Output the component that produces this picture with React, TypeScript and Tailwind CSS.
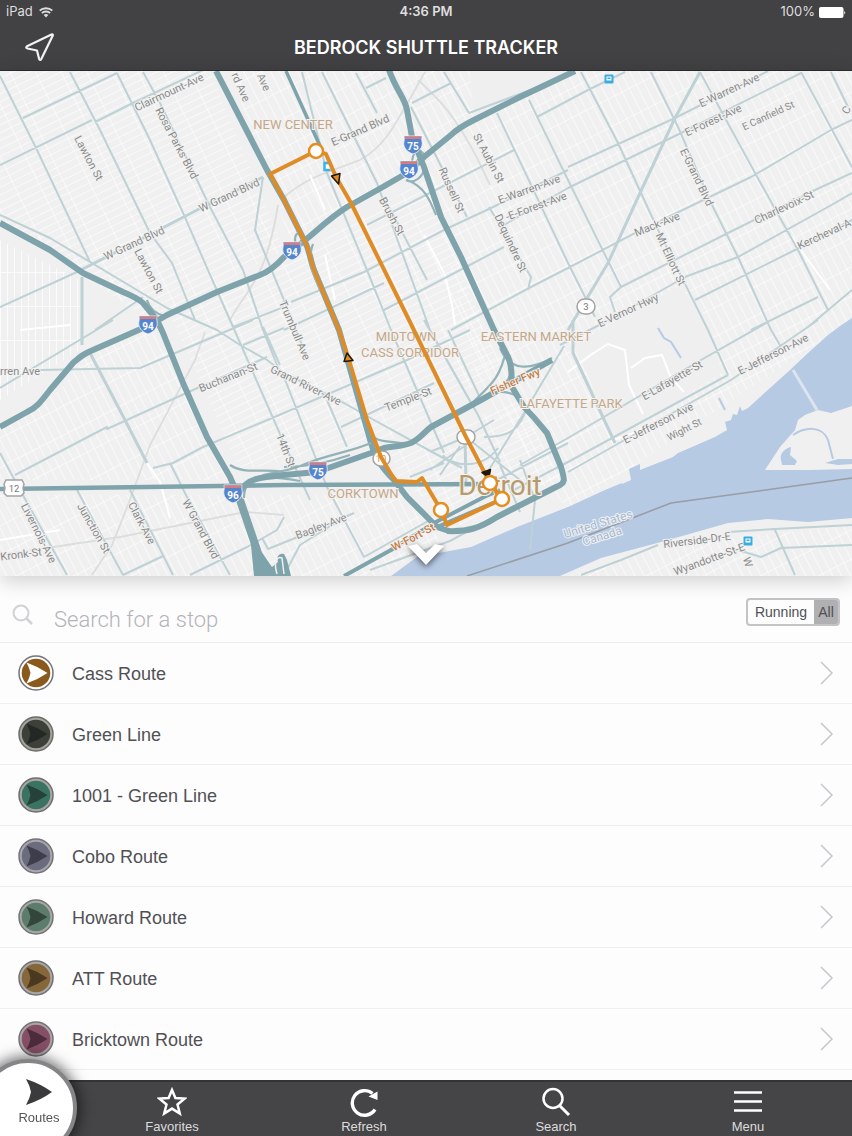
import { useState } from "react";

type Route = { name: string; color: string; ring: string; edge: string; arrow: string };

const routes: Route[] = [
  { name: "Cass Route", color: "#8a5a1c", ring: "#ffffff", edge: "#77737a", arrow: "#ffffff" },
  { name: "Green Line", color: "#3c4039", ring: "#a3a69f", edge: "#6c6d6a", arrow: "#242824" },
  { name: "1001 - Green Line", color: "#3a7361", ring: "#a9a7a8", edge: "#706d6f", arrow: "#254139" },
  { name: "Cobo Route", color: "#6b6d7e", ring: "#a9a8ae", edge: "#747278", arrow: "#3d3d4b" },
  { name: "Howard Route", color: "#5d7c6c", ring: "#a5a9a7", edge: "#737674", arrow: "#33463c" },
  { name: "ATT Route", color: "#86673a", ring: "#a9a7a8", edge: "#747172", arrow: "#4a3920" },
  { name: "Bricktown Route", color: "#854f66", ring: "#aaa4a8", edge: "#777276", arrow: "#4b2c3c" },
];

const arterials = [
  "M0 76 37 150 90 262",
  "M70 72 100 130 150 233 172 263 195 320",
  "M117 73 150 140 183 213 233 327",
  "M143 72 160 103 197 180 210 207 243 270 263 330 281 375",
  "M23 118 117 73",
  "M0 165 92 120M95 122 133 103 203 70",
  "M0 307 77 272",
  "M0 215 50 238 167 308 217 330 240 345 267 360 284 373 344 403 374 420 434 453 462 468",
  "M95 330 143 297",
  "M263 177 255 230 284 300 302 345",
  "M233 327 284 307",
  "M302 72 327 173 367 270 391 330 444 453",
  "M322 72 377 183 430 330 478 415 500 462",
  "M356 73 377 113",
  "M366 88 386 78",
  "M444 72 469 113",
  "M412 103 451 83",
  "M411 107 467 217",
  "M469 113 568 76",
  "M497 113 568 263 595 317",
  "M529 100 568 180 621 287",
  "M537 117 588 90 625 72",
  "M367 225 514 150",
  "M291 302 364 272 444 230 491 208 568 170",
  "M284 330 384 283M384 310 504 247",
  "M451 330 531 287 568 268 635 233 751 177 831 130 852 120",
  "M384 197 427 280",
  "M489 207 531 277 528 290",
  "M504 225 568 188",
  "M568 167 675 118 768 71",
  "M568 188 681 133 801 73",
  "M581 72 618 143 658 230 708 330 728 375",
  "M651 72 678 127 711 203 738 257 771 330 781 347",
  "M700 72 755 173 798 250 828 310",
  "M801 72 852 167",
  "M831 72 848 107",
  "M615 312 610 297 621 287 728 233 815 190 852 173",
  "M560 345 615 317 685 277 738 257 835 203 852 193",
  "M695 300 795 250 852 220",
  "M751 330 818 297",
  "M808 327 852 290",
  "M520 465 568 438 701 360 768 322",
  "M510 492 568 462 728 375M568 472 731 380 818 320",
  "M0 388 113 320",
  "M40 370 140 368 253 320",
  "M243 345 284 328",
  "M15 475 107 427 107 429 193 390 267 357",
  "M153 468 173 463 203 447 284 413 407 360 470 330",
  "M0 453 13 477 67 575",
  "M77 490 123 575",
  "M130 490 173 575",
  "M170 463 187 497 230 575",
  "M123 575 163 556M190 575 247 547 277 530 284 517",
  "M230 320 284 443 310 500",
  "M263 327 280 365M284 377 327 487 364 557",
  "M262 538 268 549 315 530 354 513",
  "M284 575 300 545 340 520",
  "M364 557 430 520",
  "M327 400 347 447M341 427 434 383",
  "M448 330 481 400M424 320 471 403",
  "M410 477 444 463",
  "M466 437 494 420M484 437C510 437 520 430 528 405M466 445 430 470M460 446 440 475",
  "M443 455C450 465 480 472 498 448M466 437 520 480M466 437 430 452",
  "M568 443 497 480M487 473 524 413 564 346",
  "M520 460 535 500 530 550M500 465 520 512",
  "M581 575 621 560 658 545M728 532 775 529 852 525",
  "M775 530 795 575M738 550 761 557 781 548 852 545",
  "M370 570 450 541 510 508 550 490",
];

const broadStreets = [
  "M77 272 120 250 197 210 263 177",
  "M82 277V345M90 353 125 420 147 463",
  "M700 72 675 118 640 193 608 263 568 330",
  "M573 320 573 353 615 443",
  "M465 437 466 483",
];

const ramps = [
  "M371 443C350 452 330 454 305 464C285 474 265 470 247 483",
  "M284 467C310 467 330 462 350 455",
  "M230 465C245 475 260 468 284 472",
  "M244 498C244 475 262 474 300 481",
  "M407 180C425 187 430 200 436 215",
  "M425 157C420 145 412 150 412 165",
  "M406 180C415 185 424 175 424 168",
  "M300 232C292 235 295 245 300 250",
  "M313 244C306 262 314 275 320 290",
  "M147 300C150 310 156 314 165 316",
  "M484 400C500 392 510 380 512 370",
  "M490 392C510 390 520 395 524 405",
  "M500 348C510 372 530 370 552 358",
  "M506 350C500 380 490 385 470 405",
  "M370 430C372 444 390 440 405 444",
];

const freeways = [
  "M389 70C396 90 405 98 407 110L412 137 424 167 441 217 461 257 494 330 508 357C513 367 511 376 512 387L524 407C537 420 541 426 547 433L561 467C565 480 566 483 556 487L497 517C480 528 468 532 447 531",
  "M575 71 520 97 474 120C460 127 456 130 451 135L424 157 407 173 381 188 347 207C330 218 322 226 309 237L284 257C275 267 268 272 260 275L217 292 167 315 150 325 93 350C83 354 80 357 73 363L50 390C40 403 36 408 27 412L0 427",
  "M0 223 50 250 83 273 123 292C135 297 140 300 143 303L157 320 163 333 183 383 207 437 230 477 240 500 257 550 266 575",
  "M240 492C247 478 262 477 284 475L317 472 371 453 384 448C396 446 403 446 411 443C421 438 424 432 431 427L481 400 511 383 552 360",
];

const whiteRoads =
  "M568 372 592 354 608 344 625 350 629 385 643 414M631 368 645 358 662 355 671 378 684 392M310 175 325 210M424 235 445 275 452 305 455 325M325 255 335 300M147 463 160 482 170 518M0 540 60 530M20 330 70 325M790 235 830 290M614 440 655 425";

const rail =
  "M284 197C310 175 330 172 360 160C385 147 395 125 425 72M0 555 120 537 245 512 284 515M205 332 195 360 150 445 128 505 112 545 92 575M418 80C440 100 455 115 478 160L490 185M230 320C245 290 265 285 278 205";

type Label = { x: number; y: number; a: number; t: string; s?: number };

const streetLabels: Label[] = [
  { x: 169, y: 92, a: -25, t: "Clairmount-Ave" },
  { x: 177, y: 143, a: 62, t: "Rosa Parks Blvd" },
  { x: 89, y: 158, a: 62, t: "Lawton St" },
  { x: 149, y: 271, a: 62, t: "Lawton St" },
  { x: 229, y: 195, a: -25, t: "W Grand Blvd" },
  { x: 134, y: 243, a: -25, t: "W Grand Blvd" },
  { x: 241, y: 87, a: 66, t: "rd Ave" },
  { x: 264, y: 82, a: 66, t: "Ave" },
  { x: 360, y: 130, a: -24, t: "E-Grand Blvd" },
  { x: 489, y: 158, a: 62, t: "St Aubin St" },
  { x: 452, y: 190, a: 66, t: "Russell St" },
  { x: 392, y: 216, a: 62, t: "Brush St" },
  { x: 529, y: 189, a: -20, t: "E-Warren-Ave" },
  { x: 536, y: 206, a: -20, t: "-E-Forest-Ave" },
  { x: 511, y: 243, a: 65, t: "Dequindre St" },
  { x: 295, y: 330, a: 67, t: "Trumbull Ave" },
  { x: 729, y: 90, a: -25, t: "E-Warren-Ave" },
  { x: 713, y: 120, a: -25, t: "E-Forest-Ave" },
  { x: 768, y: 115, a: -25, t: "E Canfield St", s: 10 },
  { x: 697, y: 177, a: 64, t: "E-Grand Blvd" },
  { x: 657, y: 224, a: -22, t: "Mack-Ave" },
  { x: 671, y: 259, a: 65, t: "Mt Elliott St" },
  { x: 784, y: 207, a: -25, t: "Charlevoix-St" },
  { x: 824, y: 234, a: -25, t: "Kercheval-A" },
  { x: 628, y: 310, a: -25, t: "E-Vernor Hwy" },
  { x: 672, y: 380, a: -30, t: "E-Lafayette-St" },
  { x: 773, y: 354, a: -27, t: "E-Jefferson-Ave" },
  { x: 658, y: 423, a: -27, t: "E-Jefferson Ave" },
  { x: 684, y: 429, a: -27, t: "Wight St", s: 10 },
  { x: 20, y: 371, a: 0, t: "rren Ave" },
  { x: 228, y: 377, a: -22, t: "Buchanan-St" },
  { x: 306, y: 385, a: 26, t: "Grand River-Ave" },
  { x: 408, y: 399, a: -21, t: "Temple-St" },
  { x: 286, y: 450, a: 69, t: "14th St" },
  { x: 321, y: 526, a: -21, t: "Bagley-Ave" },
  { x: 39, y: 533, a: 63, t: "Livernois-Ave" },
  { x: 94, y: 528, a: 60, t: "Junction St" },
  { x: 142, y: 523, a: 62, t: "Clark-Ave" },
  { x: 201, y: 529, a: 62, t: "W Grand Blvd" },
  { x: 21, y: 554, a: -7, t: "Kronk-St" },
  { x: 697, y: 540, a: -7, t: "Riverside-Dr-E" },
  { x: 709, y: 559, a: -20, t: "Wyandotte-St-E" },
  { x: 748, y: 562, a: 72, t: "W" },
  { x: 846, y: 110, a: -60, t: "C" },
];

const areaLabels: Label[] = [
  { x: 293, y: 129, a: 0, t: "NEW CENTER" },
  { x: 406, y: 341, a: 0, t: "MIDTOWN" },
  { x: 410, y: 357, a: 0, t: "CASS CORRIDOR" },
  { x: 536, y: 341, a: 0, t: "EASTERN MARKET" },
  { x: 571, y: 408, a: 0, t: "LAFAYETTE PARK" },
  { x: 363, y: 498, a: 0, t: "CORKTOWN" },
];

const interstates = [
  { x: 413, y: 145, n: "75" },
  { x: 409, y: 170, n: "94" },
  { x: 292, y: 251, n: "94" },
  { x: 148, y: 325, n: "94" },
  { x: 318, y: 471, n: "75" },
  { x: 233, y: 494, n: "96" },
];

const stops = [
  [316, 151],
  [441, 510],
  [502, 499],
  [490, 483],
];

const transit = [
  [609, 79],
  [748, 541],
];

function Shield({ x, y, n }: { x: number; y: number; n: string }) {
  return (
    <g transform={`translate(${x} ${y})`}>
      <path d="M-9-9H9C8-5 10-3 9 1 7 6 3 8 0 9-3 8-7 6-9 1-10-3-8-5-9-9Z" fill="#5585cf" stroke="#f4f6fa" strokeWidth=".8" />
      <path d="M-8.500-8.500H8.500L8-6H-8Z" fill="#d87b7b" />
      <text y="4.500" textAnchor="middle" fontSize="10" fontWeight="700" fill="#fff">{n}</text>
    </g>
  );
}

function MapView() {
  return (
    <svg viewBox="0 71 852 505" className="block h-auto w-full" role="img" aria-label="Shuttle map of Detroit" fontFamily="Roboto, sans-serif">
      <defs>
        <pattern id="blocks" width="23" height="7" patternUnits="userSpaceOnUse" patternTransform="rotate(-26)">
          <path d="M0 .5H23M.5 0V7" stroke="#fff" strokeOpacity=".6" strokeWidth="1" fill="none" />
        </pattern>
        <pattern id="blocksTall" width="8" height="26" patternUnits="userSpaceOnUse" patternTransform="rotate(-27)">
          <path d="M0 .5H8M.5 0V26" stroke="#fff" strokeOpacity=".6" strokeWidth="1" fill="none" />
        </pattern>
        <pattern id="blocksUpright" width="7" height="34" patternUnits="userSpaceOnUse">
          <path d="M0 .5H7M.5 0V34" stroke="#fff" strokeOpacity=".7" strokeWidth="1" fill="none" />
        </pattern>
      </defs>
      <path d="M0 71H852V576H0Z" fill="#f0f0f1" />
      <path d="M0 71H210L284 250 150 320 0 220Z" fill="url(#blocks)" />
      <path d="M230 71H852V320L568 510 480 390 425 160 290 240Z" fill="url(#blocksTall)" />
      <path d="M0 240 80 280V350L0 400Z" fill="url(#blocksUpright)" />
      <path d="M90 350 160 330 230 480H0V430L60 390Z" fill="url(#blocksTall)" />
      <path d="M170 315 290 260 425 180 500 370 390 440 240 470Z" fill="url(#blocks)" />
      <path d="M0 495H400L440 540 380 576H0Z" fill="url(#blocksTall)" />
      <path d="M390 450 520 400 560 480 460 525 400 480Z" fill="url(#blocks)" />
      <path d="M570 576 660 545 852 525V576Z" fill="url(#blocksTall)" />
      <path d="M575 345 680 285 708 330 722 372 615 440Z" fill="#efeff0" />
      <path d="M470 71H568L474 118Z" fill="#efeff0" />
      <path d={rail} fill="none" stroke="#dcdddd" strokeWidth="1.800" />
      <path d={whiteRoads} fill="none" stroke="#fff" strokeWidth="2" />

      <path d="M852 318 840 326 828 335 808 353 790 370 748 408 742 411 740 406 737 415 733 414 731 420 725 422 727 430 715 437 678 453 673 457 640 470 640 464 629 469 631 480 622 484 621 474 622 483 605 490 568 507 517 527 471 547 417 557 391 576H560L601 558 661 542 728 523 768 519 808 522 852 518Z" fill="#b6cae3" />
      <path d="M765 470 780 447 795 430 798 420 805 415 818 410 831 413 852 406V469L810 470Z" fill="#f0f0f1" />
      <path d="M781 460C779 453 786 448 791 447L790 455 797 461 795 465H782ZM825 463 838 459 852 459V464L838 465Z" fill="#b6cae3" />
      <path d="M793 435C805 427 822 425 828 440L833 459M658 328 664 338 671 342 681 358M719 398 725 410" fill="none" stroke="#b6cae3" strokeWidth="2" />
      <path d="M793 370 817 410" stroke="#dce4ee" strokeWidth="3" />
      <path d="M467 576 568 543 635 517 671 503 852 478" fill="none" stroke="#999da3" strokeWidth="1.500" />

      <g fill="none" stroke="#bed1d4" strokeLinejoin="round">
        <path d={arterials.join("")} strokeWidth="2" />
        <path d={broadStreets.join("")} strokeWidth="3" />
      </g>
      <g fill="none" stroke="#7fa3ab" strokeLinejoin="round">
        <path d="M216 71 267 170 284 200 304 240C310 250 310 260 314 270L339 330 371 443C376 460 384 470 394 480L407 497 437 527 449 531" strokeWidth="6" />
        <path d="M286 71 320 146" strokeWidth="3.500" />
        <path d={ramps.join("")} stroke="#93b2b8" strokeWidth="2.200" />
        <path d={freeways.join("")} strokeWidth="6" />
        <path d="M0 489 284 485 497 484" strokeWidth="4.500" />
        <path d="M344 576 391 550 434 523 484 497 500 490M437 527 500 500" strokeWidth="4" />
        <path d="M240 500 257 550 262 573" strokeWidth="8" />
      </g>
      <path d="M250 535 254 576H291L287 560 284 554C279 553 276 557 278 562L272 567Z" fill="#7fa3ab" />
      <path d="M277 574C273 560 278 556 282 558L284 574" fill="none" stroke="#eef0f1" strokeWidth="1.500" />

      {streetLabels.map((l, i) => (
        <text key={i} transform={`translate(${l.x} ${l.y}) rotate(${l.a})`} y="4" textAnchor="middle" fontSize={l.s ?? 11} fill="#8a8a8a" stroke="#f2f2f2" strokeWidth="2" paintOrder="stroke">{l.t}</text>
      ))}
      <g fill="#c3a88b" stroke="#f4f2f0" strokeWidth="2" paintOrder="stroke" fontSize="13">
        {areaLabels.map((l) => (
          <text key={l.t} x={l.x} y={l.y} textAnchor="middle">{l.t}</text>
        ))}
      </g>
      <g fill="#c1804f" stroke="#f4f2f0" strokeWidth="2" paintOrder="stroke" fontSize="11" fontWeight="500" textAnchor="middle">
        <text transform="translate(515 381) rotate(-23)" y="4">Fisher Fwy</text>
        <text transform="translate(413 537) rotate(-28)" y="4">W-Fort-St</text>
      </g>
      <g fill="#a9b8cc" stroke="#edf1f6" strokeWidth="2" paintOrder="stroke" fontSize="12" textAnchor="middle">
        <text transform="translate(598 524) rotate(-17)" y="4">United States</text>
        <text transform="translate(602 536) rotate(-17)" y="4">Canada</text>
      </g>
      <text x="500" y="495" textAnchor="middle" fontSize="28" fill="#b79a6c" stroke="#f4f2f0" strokeWidth="2" paintOrder="stroke">Detroit</text>

      {interstates.map((s) => (
        <Shield key={`${s.x}-${s.y}`} {...s} />
      ))}
      <g fill="#fff" stroke="#a3a3a3" strokeWidth="1.500">
        <rect x="577" y="299" width="18" height="15" rx="7.500" />
        <rect x="373" y="451" width="17" height="15" rx="7.500" />
        <rect x="457" y="430" width="18" height="14" rx="7" />
        <path d="M6 480H22L24 484 23 488 24 493 21 496H7L4 493 5 488 4 484Z" />
      </g>
      <g fontSize="9.500" fill="#777" textAnchor="middle">
        <text x="586" y="310">3</text>
        <text x="381" y="462" fill="#e0953a">10</text>
        <text x="14" y="492">12</text>
      </g>
      {transit.map(([x, y]) => (
        <g key={x}>
          <rect x={x - 4.5} y={y - 4.5} width="9" height="9" rx="1" fill="#39ace0" />
          <path d={`M${x - 2.5} ${y - 2.5}h5v4h-5z`} fill="#fff" />
          <path d={`M${x - 1.5} ${y - 1.5}h3v1.500h-3z`} fill="#39ace0" />
        </g>
      ))}
      <path d="M331 163h-6.500v7h6" fill="#fff" stroke="#39b4e8" strokeWidth="2.500" />

      <path d="M316 151 270 174 284 200 304 240C310 250 310 260 314 270L339 330 349 360 367 420 381 457 391 474 396 481 417 482 422 478 441 510 447 525 502 499 490 483 466 437 409 320 351 203 336 177 326 154 316 151" fill="none" stroke="#df8c26" strokeWidth="4" strokeLinejoin="round" />
      <g fill="#e08a22" stroke="#1e1810" strokeWidth="1.500" strokeLinejoin="round">
        <path d="M331.500 176 340 173.500 338.500 184Z" />
        <path d="M347 353 344 361.500 353 360.500Z" />
        <path d="M482 472.500 490.500 469.500 489 477Z" fill="#1e1810" />
      </g>
      {stops.map(([x, y]) => (
        <circle key={x} cx={x} cy={y} r="7" fill="#fff" stroke="#e58d1f" strokeWidth="2.500" />
      ))}
    </svg>
  );
}

function RouteBadge({ route }: { route: Route }) {
  return (
    <svg viewBox="-18 -18 36 36" className="size-9 shrink-0" aria-hidden="true">
      <circle r="17" fill={route.ring} stroke={route.edge} strokeWidth="1.500" />
      <circle r="14.300" fill={route.color} />
      <path d="M-9.500-10.500Q2-6.500 11.500 0 2 6.500-9.500 10.500-6.500 5-5.500 0-6.500-5-9.500-10.500Z" fill={route.arrow} />
    </svg>
  );
}

export default function App() {
  const [filter, setFilter] = useState("All");
  return (
    <div className="flex min-h-screen flex-col bg-[#fdfdfe] font-['Liberation_Sans',sans-serif] text-[#515055]">
      <header className="flex h-[71px] shrink-0 flex-col border-b border-[#2d2c2e] bg-[#424143] font-[Inter,sans-serif] text-white">
        <div className="grid h-6 grid-cols-3 items-center px-1.5 text-[#dededf]">
          <div className="flex items-center gap-1.5 text-[13px]">
            <span>iPad</span>
            <svg viewBox="0 0 14 11" className="h-[11px] w-3.5" fill="none" stroke="currentColor" strokeWidth="1.900" aria-label="Wi-Fi">
              <path d="M.7 3.600C4 .4 10 .4 13.300 3.600M2.900 6.100C5 4 9 4 11.100 6.100" />
              <path d="M4.700 8C6 6.800 8 6.800 9.300 8L7 10.600Z" fill="currentColor" stroke="none" />
            </svg>
          </div>
          <div className="text-center text-[13px] font-semibold">4:36 PM</div>
          <div className="flex items-center justify-end gap-1 text-[13px]">
            <span>100%</span>
            <svg viewBox="0 0 27 11" className="h-[11px] w-[27px]" fill="#fff" aria-label="Battery full">
              <rect width="24.500" height="11" rx="2" />
              <path d="M25.300 3.500Q27 5.500 25.300 7.500Z" />
            </svg>
          </div>
        </div>
        <div className="grid flex-1 grid-cols-[1fr_auto_1fr] items-center px-6">
          <button type="button" aria-label="My location" className="size-8">
            <svg viewBox="0 0 32 32" className="size-8" fill="none" stroke="#f2f2f2" strokeWidth="2.200" strokeLinejoin="round">
              <path d="M27.500 3.500C28.500 3 29 3.500 28.800 4.500L17.300 28C16.500 29.500 15.300 29 15 27.500L13 19.500 3.500 17.500C2 17.100 1.800 16.300 3 15.300Z" />
            </svg>
          </button>
          <h1 className="text-[18px] font-semibold">BEDROCK SHUTTLE TRACKER</h1>
        </div>
      </header>

      <main className="flex flex-1 flex-col">
        <section className="relative shadow-[0_4px_20px_rgba(0,0,0,0.2)]">
          <MapView />
          <button type="button" aria-label="Collapse map" className="absolute bottom-1 left-1/2 -translate-x-1/2">
            <svg viewBox="0 0 44 32" className="h-8 w-11 drop-shadow-[0_2px_3px_rgba(0,0,0,0.6)]">
              <path d="M4 6 13 4 22 13 31 4 40 6 22 25Z" fill="#fff" />
            </svg>
          </button>
        </section>

        <div className="flex h-[67px] shrink-0 items-center border-b border-[#ececef] px-3 pt-3">
          <label htmlFor="stop-search" className="flex w-[42px] items-center">
            <svg viewBox="0 0 22 22" className="size-[22px]" fill="none" stroke="#d2d2d6" strokeWidth="2" aria-label="Search">
              <circle cx="9" cy="9" r="7.500" />
              <path d="M14.500 14.500 20 20" strokeWidth="2.500" />
            </svg>
          </label>
          <input id="stop-search" type="search" placeholder="Search for a stop" className="h-10 min-w-0 flex-1 bg-transparent pt-2 font-[Roboto,sans-serif] text-[22px] font-light outline-none placeholder:text-[#b4b4b8]" />
          <div role="group" aria-label="Route filter" className="mb-1.5 flex h-7 overflow-hidden rounded-[4px] border-2 border-[#c4c3c6] text-[14px]">
            {["Running", "All"].map((f) => (
              <button key={f} type="button" aria-pressed={filter === f} onClick={() => setFilter(f)} className="px-1 first:w-[66px] last:w-6 aria-pressed:bg-[#b0afb1]">
                {f}
              </button>
            ))}
          </div>
        </div>

        <ul className="flex-1">
          {routes.map((r) => (
            <li key={r.name} className="border-b border-[#efeff1]">
              <button type="button" className="flex h-[60px] w-full items-center px-[18px] text-left text-[18px]">
                <RouteBadge route={r} />
                <span className="ml-[18px] flex-1 pt-0.5">{r.name}</span>
                <svg viewBox="0 0 16 24" className="h-6 w-4" fill="none" stroke="#c8c7cc" strokeWidth="1.500" aria-hidden="true">
                  <path d="M3 1 14 12 3 23" />
                </svg>
              </button>
            </li>
          ))}
        </ul>
      </main>

      <nav aria-label="Main" className="sticky bottom-0 mt-2 flex h-14 shrink-0 border-t-2 border-[#343335] bg-[#454446] pr-2 pl-[76px] text-[13px] text-[#dcdcdd]">
        <div className="absolute -bottom-[21px] -left-[21px] size-[98px] [clip-path:inset(-40px_-40px_21px_21px)]">
          <button type="button" aria-current="page" className="flex size-full flex-col items-center rounded-full border-4 border-[#858486] bg-white pt-[15px] pl-[22px] text-[#555458] shadow-[0_0_14px_3px_rgba(0,0,0,0.55)]">
            <svg viewBox="0 0 28 28" className="size-7 shrink-0" fill="#3b3a3c" aria-hidden="true">
              <path d="M1 1Q16 6 27 14 16 22 1 27 5 20 6 14 5 8 1 1Z" />
            </svg>
            <span className="leading-6">Routes</span>
          </button>
        </div>
        <button type="button" className="flex flex-1 flex-col items-center gap-0.5 pt-[5px]">
          <svg viewBox="0 0 30 30" className="size-[30px] shrink-0" fill="none" stroke="#fff" strokeWidth="2.500" aria-hidden="true">
            <path d="M15 3 18.400 11 27.500 11.600 20.500 17.500 22.800 26.500 15 21.600 7.200 26.500 9.500 17.500 2.500 11.600 11.600 11Z" />
          </svg>
          <span className="leading-4">Favorites</span>
        </button>
        <button type="button" className="flex flex-1 flex-col items-center gap-0.5 pt-[5px]">
          <svg viewBox="0 0 30 30" className="size-[30px] shrink-0" fill="none" stroke="#fff" strokeWidth="3.400" aria-hidden="true">
            <path d="M26 22.500A12.300 12.300 0 1 1 23.500 6.500" />
            <path d="M28.500 4.500V13L19.500 9.500Z" fill="#fff" stroke="none" />
          </svg>
          <span className="leading-4">Refresh</span>
        </button>
        <button type="button" className="flex flex-1 flex-col items-center gap-0.5 pt-[5px]">
          <svg viewBox="0 0 30 30" className="size-[30px] shrink-0" fill="none" stroke="#fff" strokeWidth="2.500" aria-hidden="true">
            <circle cx="12" cy="11.500" r="9.500" />
            <path d="M18.500 18.500 28 28" strokeWidth="3" />
          </svg>
          <span className="leading-4">Search</span>
        </button>
        <button type="button" className="flex flex-1 flex-col items-center gap-0.5 pt-[5px]">
          <svg viewBox="0 0 30 30" className="size-[30px] shrink-0" fill="none" stroke="#fff" strokeWidth="2.500" aria-hidden="true">
            <path d="M1 5.500H29M1 14.500H29M1 23.500H29" />
          </svg>
          <span className="leading-4">Menu</span>
        </button>
      </nav>
    </div>
  );
}
